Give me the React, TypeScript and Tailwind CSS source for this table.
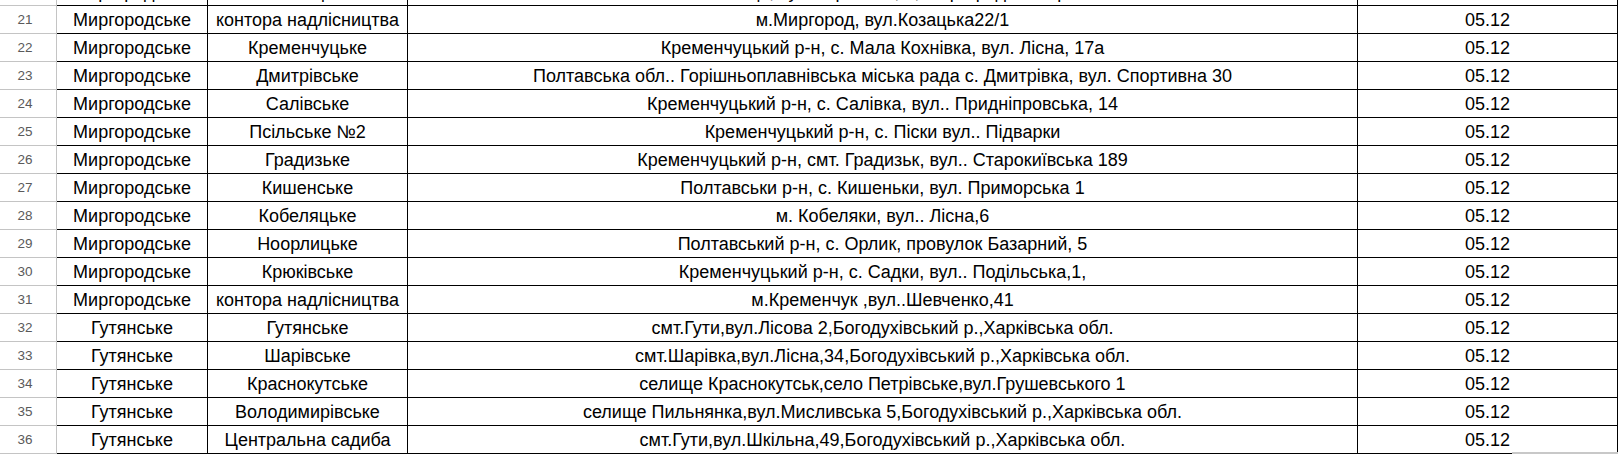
import React from "react";

type Row = [number, string, string, string, string];

const rows: Row[] = [
  [20, "Миргородське", "Лохвицьке", "м.Лохвиця, вул.Перемоги, 4, Миргородський р-н", "05.12"],
  [21, "Миргородське", "контора надлісництва", "м.Миргород, вул.Козацька22/1", "05.12"],
  [22, "Миргородське", "Кременчуцьке", "Кременчуцький р-н, с. Мала Кохнівка, вул. Лісна, 17а", "05.12"],
  [23, "Миргородське", "Дмитрівське", "Полтавська обл.. Горішньоплавнівська міська рада с. Дмитрівка, вул. Спортивна 30", "05.12"],
  [24, "Миргородське", "Салівське", "Кременчуцький р-н, с. Салівка, вул.. Придніпровська, 14", "05.12"],
  [25, "Миргородське", "Псільське №2", "Кременчуцький р-н, с. Піски вул.. Підварки", "05.12"],
  [26, "Миргородське", "Градизьке", "Кременчуцький р-н, смт. Градизьк, вул.. Старокиївська 189", "05.12"],
  [27, "Миргородське", "Кишенське", "Полтавськи р-н, с. Кишеньки, вул. Приморська 1", "05.12"],
  [28, "Миргородське", "Кобеляцьке", "м. Кобеляки, вул.. Лісна,6", "05.12"],
  [29, "Миргородське", "Ноорлицьке", "Полтавський р-н, с. Орлик, провулок Базарний, 5", "05.12"],
  [30, "Миргородське", "Крюківське", "Кременчуцький р-н, с. Садки, вул.. Подільська,1,", "05.12"],
  [31, "Миргородське", "контора надлісництва", "м.Кременчук ,вул..Шевченко,41", "05.12"],
  [32, "Гутянське", "Гутянське", "смт.Гути,вул.Лісова 2,Богодухівський р.,Харківська обл.", "05.12"],
  [33, "Гутянське", "Шарівське", "смт.Шарівка,вул.Лісна,34,Богодухівський р.,Харківська обл.", "05.12"],
  [34, "Гутянське", "Краснокутське", "селище Краснокутськ,село Петрівське,вул.Грушевського 1", "05.12"],
  [35, "Гутянське", "Володимирівське", "селище Пильнянка,вул.Мисливська 5,Богодухівський р.,Харківська обл.", "05.12"],
  [36, "Гутянське", "Центральна садиба", "смт.Гути,вул.Шкільна,49,Богодухівський р.,Харківська обл.", "05.12"],
];

function Cell({ w, children }: { w: string; children: React.ReactNode }) {
  return (
    <div
      className={`${w} h-full shrink-0 border-r border-b border-black flex items-center justify-center whitespace-nowrap overflow-hidden text-[18px] leading-[27px] pt-[1px] text-black`}
    >
      {children}
    </div>
  );
}

export default function App() {
  return (
    <div
      className="relative w-[1620px] h-[454px] overflow-hidden bg-white"
      style={{ fontFamily: '"Liberation Sans", Arial, sans-serif' }}
    >
      <div className="flex flex-col mt-[-22px]">
        {rows.map(([n, a, b, c, d]) => (
          <div key={n} className="flex h-[28px] shrink-0">
            <div className="w-[57px] h-full shrink-0 border-r border-b border-[#c4c4c4] flex items-center justify-center pr-[6px] pt-[1px] text-[13.5px] text-[#5a5a5a]">
              {n === 20 ? "" : n}
            </div>
            <Cell w="w-[151px]">{a}</Cell>
            <Cell w="w-[200px]">{b}</Cell>
            <Cell w="w-[950px]">{c}</Cell>
            <Cell w="w-[260px]">{d}</Cell>
          </div>
        ))}
      </div>
      <div className="absolute left-[1512px] bottom-0 w-[106px] h-[2px] bg-[#c8c8c8]" />
    </div>
  );
}
